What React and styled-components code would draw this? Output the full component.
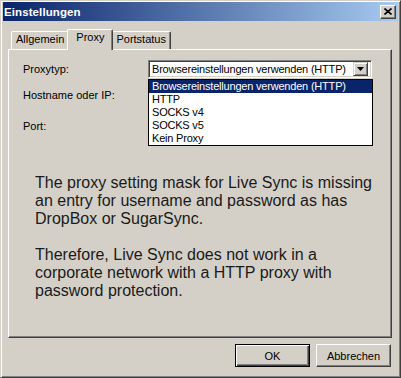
import React from 'react';
import styled, { createGlobalStyle } from 'styled-components';

const Global = createGlobalStyle`
  html, body { margin: 0; padding: 0; background: #D4D0C8; }
  body {
    font-family: "Liberation Sans", Arial, sans-serif;
    font-size: 11px;
    color: #000;
  }
`;

const Window = styled.div`
  box-sizing: border-box;
  width: 401px;
  height: 378px;
  background: #D4D0C8;
  border: 1px solid;
  border-color: #D4D0C8 #404040 #404040 #D4D0C8;
  box-shadow: inset 1px 1px #fff, inset -1px -1px #808080;
  padding: 1px 2px 2px 2px;
  display: flex;
  flex-direction: column;
`;

const TitleBar = styled.div`
  height: 19px;
  flex: none;
  display: flex;
  align-items: center;
  justify-content: space-between;
  padding: 0 2px 0 1px;
  background: linear-gradient(to right, #0A246A, #A6CAF0);
`;

const Title = styled.span`
  color: #fff;
  font-weight: bold;
  font-size: 11.5px;
  letter-spacing: 0.1px;
`;

const CloseButton = styled.div`
  box-sizing: border-box;
  width: 16px;
  height: 14px;
  background: #D4D0C8;
  border: 1px solid;
  border-color: #fff #404040 #404040 #fff;
  box-shadow: inset -1px -1px #808080;
  display: flex;
  align-items: center;
  justify-content: center;
  padding: 0 1px 1px 0;
`;

const Content = styled.div`
  flex: 1;
  display: flex;
  flex-direction: column;
  padding: 8px 6px 8px 5px;
  min-height: 0;
`;

const TabStrip = styled.div`
  display: flex;
  align-items: flex-end;
  height: 20px;
  padding-left: 3px;
  position: relative;
  z-index: 1;
`;

const Tab = styled.div`
  box-sizing: border-box;
  height: ${p => (p.$active ? 21 : 18)}px;
  margin: ${p => (p.$active ? '0 -2px -1px' : '0')};
  padding: 1px ${p => (p.$active ? 8 : 4)}px 0;
  background: #D4D0C8;
  border-top: 1px solid #fff;
  border-left: 1px solid #fff;
  border-right: 1px solid #404040;
  box-shadow: inset -1px 0 #808080;
  border-top-left-radius: 2px;
  border-top-right-radius: 2px;
  line-height: 13px;
  white-space: nowrap;
  position: relative;
  z-index: ${p => (p.$active ? 2 : 1)};
`;

const Panel = styled.div`
  flex: 1;
  display: flex;
  flex-direction: column;
  border: 1px solid;
  border-color: #fff #404040 #404040 #fff;
  box-shadow: inset -1px -1px #808080;
  padding: 10px 0 0 14px;
`;

const Row = styled.div`
  display: flex;
  align-items: center;
  height: 18px;
  margin-top: ${p => p.$gap || 0}px;
  position: relative;
`;

const Label = styled.div`
  width: 125px;
  flex: none;
  line-height: 13px;
`;

const Field = styled.div`
  position: relative;
  box-sizing: border-box;
  width: 224px;
  height: 18px;
  background: #fff;
  border: 1px solid;
  border-color: #808080 #fff #fff #808080;
  box-shadow: inset 1px 1px #404040, inset -1px -1px #D4D0C8;
  display: flex;
  align-items: center;
  padding: 2px 2px 2px 3px;
  line-height: 13px;
`;

const FieldText = styled.span`
  flex: 1;
  white-space: nowrap;
  overflow: hidden;
  letter-spacing: -0.2px;
`;

const DropButton = styled.div`
  box-sizing: border-box;
  width: 15px;
  height: 14px;
  background: #D4D0C8;
  border: 1px solid;
  border-color: #D4D0C8 #404040 #404040 #D4D0C8;
  box-shadow: inset 1px 1px #fff, inset -1px -1px #808080;
  display: flex;
  align-items: center;
  justify-content: center;
  margin-right: 1px;
`;

const DropList = styled.ul`
  position: absolute;
  left: -1px;
  top: 18px;
  z-index: 5;
  box-sizing: border-box;
  width: 225px;
  margin: 0;
  padding: 0;
  list-style: none;
  background: #fff;
  border: 1px solid #000;
`;

const Option = styled.li`
  height: 13px;
  line-height: 13px;
  padding-left: 3px;
  white-space: nowrap;
  letter-spacing: -0.2px;
  background: ${p => (p.$selected ? '#0A246A' : '#fff')};
  color: ${p => (p.$selected ? '#fff' : '#000')};
`;

const Note = styled.div`
  margin: 39px 0 0 12px;
  width: 345px;
  font-size: 16px;
  line-height: 18px;
  color: #1a1a1a;
`;

const Para = styled.p`
  margin: 0 0 18px;
`;

const ButtonRow = styled.div`
  display: flex;
  justify-content: flex-end;
  gap: 6px;
  margin-top: 6px;
  padding-right: 1px;
`;

const Button = styled.div`
  box-sizing: border-box;
  width: 75px;
  height: 23px;
  display: flex;
  align-items: center;
  justify-content: center;
  background: #D4D0C8;
  border: 1px solid;
  border-color: ${p => (p.$default ? '#000' : '#fff #404040 #404040 #fff')};
  box-shadow: ${p =>
    p.$default
      ? 'inset 1px 1px #fff, inset -1px -1px #404040, inset -2px -2px #808080'
      : 'inset -1px -1px #808080'};
`;

const options = [
  'Browsereinstellungen verwenden (HTTP)',
  'HTTP',
  'SOCKS v4',
  'SOCKS v5',
  'Kein Proxy',
];

export default function App() {
  return (
    <>
      <Global />
      <Window>
        <TitleBar>
          <Title>Einstellungen</Title>
          <CloseButton>
            <svg width="8" height="7" viewBox="0 0 8 7">
              <path d="M0.5 0.5 L7.5 6.5 M7.5 0.5 L0.5 6.5" stroke="#000" strokeWidth="1.6" fill="none" />
            </svg>
          </CloseButton>
        </TitleBar>
        <Content>
          <TabStrip>
            <Tab>Allgemein</Tab>
            <Tab $active>Proxy</Tab>
            <Tab>Portstatus</Tab>
          </TabStrip>
          <Panel>
            <Row>
              <Label>Proxytyp:</Label>
              <Field>
                <FieldText>Browsereinstellungen verwenden (HTTP)</FieldText>
                <DropButton>
                  <svg width="7" height="4" viewBox="0 0 7 4">
                    <polygon points="0,0 7,0 3.5,4" fill="#000" />
                  </svg>
                </DropButton>
                <DropList>
                  {options.map((o, i) => (
                    <Option key={o} $selected={i === 0}>{o}</Option>
                  ))}
                </DropList>
              </Field>
            </Row>
            <Row $gap={8}>
              <Label>Hostname oder IP:</Label>
              <Field />
            </Row>
            <Row $gap={13}>
              <Label>Port:</Label>
              <Field />
            </Row>
            <Note>
              <Para>
                The proxy setting mask for Live Sync is missing an entry for username and password as has DropBox or SugarSync.
              </Para>
              <Para>
                Therefore, Live Sync does not work in a corporate network with a HTTP proxy with password protection.
              </Para>
            </Note>
          </Panel>
          <ButtonRow>
            <Button $default>OK</Button>
            <Button>Abbrechen</Button>
          </ButtonRow>
        </Content>
      </Window>
    </>
  );
}
